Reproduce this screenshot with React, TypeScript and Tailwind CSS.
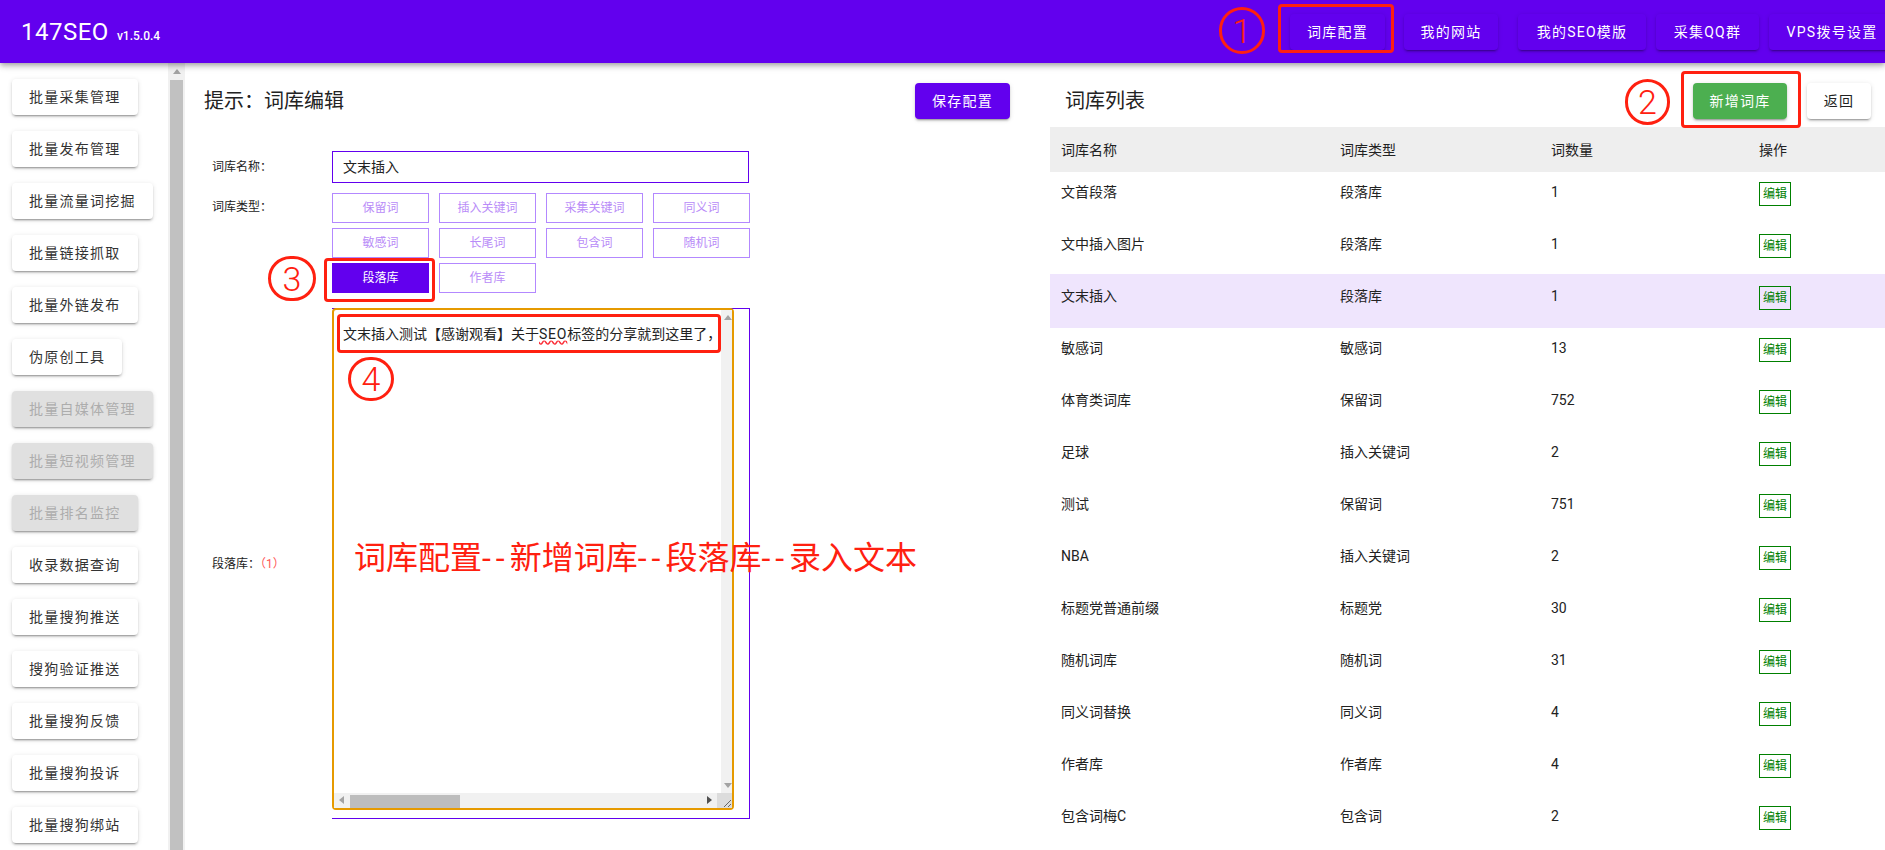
import { clsx } from "clsx";

const sideItems = [
  { label: "批量采集管理" },
  { label: "批量发布管理" },
  { label: "批量流量词挖掘" },
  { label: "批量链接抓取" },
  { label: "批量外链发布" },
  { label: "伪原创工具" },
  { label: "批量自媒体管理", disabled: true },
  { label: "批量短视频管理", disabled: true },
  { label: "批量排名监控", disabled: true },
  { label: "收录数据查询" },
  { label: "批量搜狗推送" },
  { label: "搜狗验证推送" },
  { label: "批量搜狗反馈" },
  { label: "批量搜狗投诉" },
  { label: "批量搜狗绑站" },
];

const typeOptions = [
  "保留词",
  "插入关键词",
  "采集关键词",
  "同义词",
  "敏感词",
  "长尾词",
  "包含词",
  "随机词",
  "段落库",
  "作者库",
];

const rows = [
  ["文首段落", "段落库", "1"],
  ["文中插入图片", "段落库", "1"],
  ["文末插入", "段落库", "1"],
  ["敏感词", "敏感词", "13"],
  ["体育类词库", "保留词", "752"],
  ["足球", "插入关键词", "2"],
  ["测试", "保留词", "751"],
  ["NBA", "插入关键词", "2"],
  ["标题党普通前缀", "标题党", "30"],
  ["随机词库", "随机词", "31"],
  ["同义词替换", "同义词", "4"],
  ["作者库", "作者库", "4"],
  ["包含词梅C", "包含词", "2"],
];

const shadow = "shadow-[0_3px_1px_-2px_rgba(0,0,0,0.2),0_2px_2px_0_rgba(0,0,0,0.14),0_1px_5px_0_rgba(0,0,0,0.12)]";
const btnText = "h-9 rounded flex items-center justify-center text-sm tracking-[1.25px] whitespace-nowrap";

function Circled({ n, className }: { n: string; className: string }) {
  return (
    <div
      className={clsx(
        "absolute z-20 flex items-center justify-center rounded-full border-[3px] border-[#ff2010] text-[34px] leading-none font-light text-[#ff2010]",
        className
      )}
    >
      {n}
    </div>
  );
}

function RedBox({ className }: { className: string }) {
  return <div className={clsx("absolute z-20 rounded-sm border-[3px] border-[#ff2010]", className)} />;
}

function TextareaBox() {
  return (
    <div className="relative h-[511px] w-[418px] border-r border-b border-t border-[#6200ee]">
      <div className="absolute left-0 -top-px flex h-[502px] w-[402px] flex-col rounded border-2 border-[#e69a00] bg-white">
        <div className="flex min-h-0 flex-1">
          <div className="flex-1 pl-[9px] pt-[11px] text-sm leading-[26px] whitespace-nowrap text-[#222]">
            文末插入测试【感谢观看】关于
            <span className="tracking-[0.8px] underline decoration-wavy decoration-red-500">SEO</span>
            标签的分享就到这里了{"\uFF0C"}
          </div>
          <div className="relative w-[15px] bg-[#f1f1f1]">
            <div className="absolute left-[3px] top-[5px] h-0 w-0 border-x-[4px] border-b-[5px] border-x-transparent border-b-[#a3a3a3]" />
            <div className="absolute bottom-[5px] left-[3px] h-0 w-0 border-x-[4px] border-t-[5px] border-x-transparent border-t-[#a3a3a3]" />
          </div>
        </div>
        <div className="flex h-[15px]">
          <div className="relative flex-1 bg-[#f1f1f1]">
            <div className="absolute left-[5px] top-[3px] h-0 w-0 border-y-[4px] border-r-[5px] border-y-transparent border-r-[#a3a3a3]" />
            <div className="absolute left-[16px] top-[2px] h-[13px] w-[110px] bg-[#bdbdbd]" />
            <div className="absolute right-[5px] top-[3px] h-0 w-0 border-y-[4px] border-l-[5px] border-y-transparent border-l-[#505050]" />
          </div>
          <div className="relative w-[15px] overflow-hidden bg-[#dcdcdc]">
            <svg width="15" height="15" viewBox="0 0 15 15" className="absolute inset-0">
              <path d="M14 7L7 14M14 11L11 14" stroke="#666" strokeWidth="1" fill="none" />
            </svg>
          </div>
        </div>
      </div>
    </div>
  );
}

export default function App() {
  return (
    <div
      lang="zh-CN"
      className="relative h-[850px] w-[1885px] overflow-hidden bg-white font-['Roboto','Noto_Sans_CJK_SC',sans-serif] text-[#222]"
    >
      {/* 顶栏 */}
      <header className="relative z-10 flex h-[63px] items-center justify-between overflow-hidden bg-[#6200ee] pl-[21px] text-white shadow-[0_2px_4px_-1px_rgba(0,0,0,0.2),0_4px_5px_0_rgba(0,0,0,0.14),0_1px_10px_0_rgba(0,0,0,0.12)]">
        <div className="flex items-baseline">
          <span className="text-2xl tracking-[0.5px]">147SEO</span>
          <span className="ml-2 text-xs font-medium">v1.5.0.4</span>
        </div>
        <div className="-mr-[10px] flex items-center">
          {[
            ["词库配置", "w-[95px] mr-[19px]"],
            ["我的网站", "w-[94px] mr-[20px]"],
            ["我的SEO模版", "w-[128px] mr-[10px]"],
            ["采集QQ群", "w-[103px] mr-[10px]"],
            ["VPS拨号设置", "w-[126px]"],
          ].map(([label, cls]) => (
            <div key={label} className={clsx(btnText, shadow, "bg-[#6200ee]", cls)}>
              {label}
            </div>
          ))}
        </div>
      </header>

      <main className="flex h-[787px]">
        {/* 左侧菜单 */}
        <aside className="flex w-[168px] shrink-0 flex-col items-start gap-4 pl-3 pt-4">
          {sideItems.map((item) => (
            <div
              key={item.label}
              className={clsx(
                btnText,
                shadow,
                "shrink-0 px-[17px]",
                item.disabled ? "bg-[#e0e0e0] text-[#adadad]" : "bg-white text-[#333]"
              )}
            >
              {item.label}
            </div>
          ))}
        </aside>
        <div className="flex w-[17px] shrink-0 flex-col items-center bg-[#f1f1f1] pt-[6px]">
          <div className="h-0 w-0 border-x-[4px] border-b-[5px] border-x-transparent border-b-[#a3a3a3]" />
          <div className="mt-[6px] w-[13px] flex-1 bg-[#c1c1c1]" />
        </div>

        {/* 词库编辑 */}
        <section className="w-[865px] shrink-0 pl-[19px] pr-10 pt-5">
          <div className="flex h-9 items-center justify-between">
            <h2 className="text-xl leading-none">提示{"\uFF1A"}词库编辑</h2>
            <div className={clsx(btnText, shadow, "w-[95px] bg-[#6200ee] text-white")}>保存配置</div>
          </div>
          <div className="mt-8 flex items-center text-xs">
            <label className="ml-2 w-[120px] shrink-0">词库名称{"\uFF1A"}</label>
            <div className="flex h-8 w-[417px] items-center border border-[#6200ee] pl-[10px] text-sm">文末插入</div>
          </div>
          <div className="mt-[10px] flex text-xs">
            <label className="ml-2 mt-[6px] w-[120px] shrink-0">词库类型{"\uFF1A"}</label>
            <div className="grid w-[418px] grid-cols-4 gap-x-[10px] gap-y-[5px]">
              {typeOptions.map((t) => (
                <div
                  key={t}
                  className={clsx(
                    "flex h-[30px] items-center justify-center border",
                    t === "段落库"
                      ? "border-[#6200ee] bg-[#6200ee] text-white"
                      : "border-[#b388ff] text-[#b98cf8]"
                  )}
                >
                  {t}
                </div>
              ))}
            </div>
          </div>
          <div className="mt-[15px] flex items-center text-xs">
            <label className="ml-2 w-[120px] shrink-0">
              段落库{"\uFF1A"}<span className="text-[#f55]">{"\uFF08"}1{"\uFF09"}</span>
            </label>
            <TextareaBox />
          </div>
        </section>

        {/* 词库列表 */}
        <section className="min-w-0 flex-1 pt-5">
          <div className="flex h-9 items-center justify-between pl-[15px] pr-[14px]">
            <h2 className="text-xl leading-none">词库列表</h2>
            <div className="flex gap-5">
              <div className={clsx(btnText, shadow, "w-[94px] bg-[#4caf50] text-white")}>新增词库</div>
              <div className={clsx(btnText, shadow, "w-[64px] bg-white")}>返回</div>
            </div>
          </div>
          <div className="mt-2 grid h-[45px] grid-cols-[279px_211px_208px_1fr] items-center bg-[#eee] pl-[11px] text-sm">
            <div>词库名称</div>
            <div>词库类型</div>
            <div>词数量</div>
            <div>操作</div>
          </div>
          {rows.map((r) => (
            <div
              key={r[0]}
              className={clsx(
                "grid grid-cols-[279px_211px_208px_1fr] items-start pl-[11px] text-sm",
                r[0] === "文末插入" ? "-mt-[2px] h-[54px] bg-[#efe5fd] pt-3" : "h-[52px] pt-[10px]"
              )}
            >
              <div className="leading-5">{r[0]}</div>
              <div className="leading-5">{r[1]}</div>
              <div className="leading-5">{r[2]}</div>
              <div className="flex h-6 w-8 items-center justify-center border border-[#008000] text-xs text-[#008000]">
                编辑
              </div>
            </div>
          ))}
        </section>
      </main>

      {/* 标注 */}
      <Circled n="1" className="left-[1219px] top-[7px] h-[47px] w-[46px]" />
      <RedBox className="left-[1278px] top-[4px] h-[49px] w-[116px]" />
      <Circled n="2" className="left-[1625px] top-[79px] h-[46px] w-[45px]" />
      <RedBox className="left-[1681px] top-[71px] h-[57px] w-[120px]" />
      <Circled n="3" className="left-[268px] top-[256px] h-[45px] w-[48px]" />
      <RedBox className="left-[324px] top-[258px] h-[44px] w-[111px]" />
      <RedBox className="left-[337px] top-[314px] h-[39px] w-[384px]" />
      <Circled n="4" className="left-[348px] top-[357px] h-[44px] w-[46px]" />
      <div className="absolute left-[354px] top-[534px] z-20 text-[32px] leading-[48px] whitespace-nowrap text-[#ff2010]">
        词库配置<span className="tracking-[5px]">--</span>新增词库<span className="tracking-[5px]">--</span>段落库<span className="tracking-[5px]">--</span>录入文本
      </div>
    </div>
  );
}
